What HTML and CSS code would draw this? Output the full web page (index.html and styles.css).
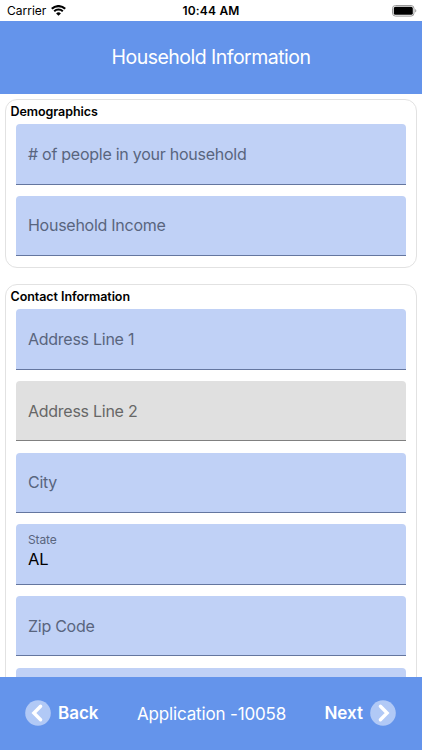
FILE: index.html
```html
<!DOCTYPE html>
<html lang="en">
<head>
    <meta charset="UTF-8">
    <meta name="viewport" content="width=device-width, initial-scale=1.0">
    <title>Household Information</title>
    <link rel="stylesheet" href="styles.css">
</head>
<body>
    <div class="status-bar">
        <div class="carrier">
            <span>Carrier</span>
            <svg width="15" height="11" viewBox="0 0 15 11" fill="none" stroke="#000">
                <path d="M0.8 3.8a9.6 9.6 0 0 1 13.4 0" stroke-width="2.2"/>
                <path d="M3.2 6.3a6.2 6.2 0 0 1 8.6 0" stroke-width="2"/>
                <path d="M7.5 10.8L5.1 8.4a3.5 3.5 0 0 1 4.8 0z" fill="#000" stroke="none"/>
            </svg>
        </div>
        <span class="time">10:44 AM</span>
        <div class="battery">
            <svg width="25" height="12" viewBox="0 0 25 12">
                <rect x="0.5" y="0.5" width="21.5" height="10.6" rx="3" fill="#fff" stroke="#999"/>
                <rect x="1.8" y="1.8" width="19" height="8" rx="1.6" fill="#000"/>
                <path d="M23.2 4v3.6c1.5-.6 1.5-3 0-3.6z" fill="#999"/>
            </svg>
        </div>
    </div>

    <header>
        <h1>Household Information</h1>
    </header>

    <main>
        <section class="card">
            <h2>Demographics</h2>
            <div class="field"><label>&#35; of people in your household</label></div>
            <div class="field"><label>Household Income</label></div>
        </section>

        <section class="card">
            <h2>Contact Information</h2>
            <div class="field"><label>Address Line 1</label></div>
            <div class="field optional"><label>Address Line 2</label></div>
            <div class="field"><label>City</label></div>
            <div class="field filled">
                <label>State</label>
                <span class="value">AL</span>
            </div>
            <div class="field"><label>Zip Code</label></div>
            <div class="field"></div>
        </section>
    </main>

    <footer>
        <div class="nav-button">
            <svg width="26" height="26" viewBox="0 0 26 26">
                <circle cx="13" cy="13" r="12.8" fill="#b1c9f6"/>
                <path d="M15.6 6.3L8.9 13l6.7 6.7" fill="none" stroke="#fff" stroke-width="3.4" stroke-linecap="round"/>
            </svg>
            <span>Back</span>
        </div>
        <span class="application">Application -10058</span>
        <div class="nav-button">
            <span>Next</span>
            <svg width="26" height="26" viewBox="0 0 26 26">
                <circle cx="13" cy="13" r="12.8" fill="#b1c9f6"/>
                <path d="M10.4 6.3L17.1 13l-6.7 6.7" fill="none" stroke="#fff" stroke-width="3.4" stroke-linecap="round"/>
            </svg>
        </div>
    </footer>
</body>
</html>
```
FILE: styles.css
```css
* {
    box-sizing: border-box;
}

body {
    display: flex;
    flex-direction: column;
    height: 750px;
    margin: 0;
    overflow: hidden;
    background-color: #fff;
    color: #000;
    font-family: Inter, 'Liberation Sans', sans-serif;
}

/* iOS status bar */
.status-bar {
    display: grid;
    grid-template-columns: 1fr auto 1fr;
    align-items: center;
    flex: none;
    height: 21px;
    padding: 0 5px 0 7px;
    font-size: 12px;
}

.carrier {
    display: flex;
    align-items: center;
    gap: 5px;
}

.time {
    padding-right: 2px;
    font-weight: 600;
    letter-spacing: 0.2px;
}

.battery {
    display: flex;
    justify-content: flex-end;
}

header {
    display: flex;
    justify-content: center;
    align-items: center;
    flex: none;
    height: 73px;
    padding-bottom: 2px;
    background-color: #6494eb;
}

h1 {
    margin: 0;
    color: #fff;
    font-size: 19.5px;
    font-weight: 400;
    letter-spacing: -0.52px;
}

main {
    flex: 1;
    min-height: 0;
    overflow: hidden;
    padding: 5px 5px 0;
}

.card {
    margin-bottom: 16px;
    padding: 0 9.6px 11px;
    border: 1px solid #e2e2e2;
    border-radius: 12px;
}

h2 {
    margin: 0 0 0 -5px;
    height: 24px;
    line-height: 23px;
    font-size: 12.5px;
    font-weight: 600;
    letter-spacing: -0.07px;
}

.field {
    display: flex;
    flex-direction: column;
    justify-content: center;
    height: 60.5px;
    margin-bottom: 11.2px;
    padding-left: 12.4px;
    background-color: #c0d1f6;
    border-bottom: 1px solid #64769f;
    border-radius: 4px 4px 0 0;
}

.field:last-child {
    margin-bottom: 0;
}

.field label {
    color: #59657e;
    font-size: 16px;
    letter-spacing: -0.26px;
}

.field.optional {
    background-color: #e0e0e0;
    border-bottom-color: #808080;
}

.field.optional label {
    color: #676767;
}

.field.filled {
    padding-bottom: 7px;
}

.field.filled label {
    font-size: 12px;
    letter-spacing: -0.1px;
}

.value {
    margin-top: 2px;
    font-size: 16.5px;
}

footer {
    display: flex;
    justify-content: space-between;
    align-items: center;
    flex: none;
    height: 73px;
    padding: 0 26px 0 25px;
    background-color: #6494eb;
    color: #fff;
}

.nav-button {
    display: flex;
    align-items: center;
    gap: 7px;
    padding-bottom: 2px;
    font-size: 17px;
    font-weight: 600;
}

.application {
    font-size: 17px;
    letter-spacing: -0.15px;
}
```
